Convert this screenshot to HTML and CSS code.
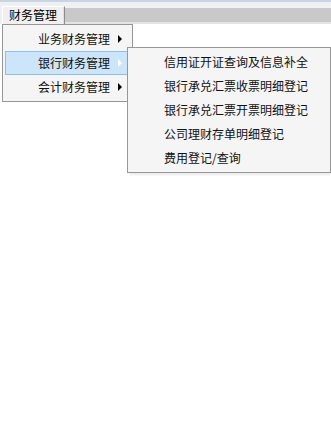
FILE: index.html
```html
<!DOCTYPE html>
<html lang="zh-CN">
<head>
<meta charset="utf-8">
<title>财务管理</title>
<link rel="stylesheet" href="styles.css">
</head>
<body>
<div class="menubar">
  <div class="tab">财务管理</div>
  <div class="bar"></div>
</div>
<div class="menu main-menu">
  <div class="item"><span class="label">业务财务管理</span><span class="arrow"></span></div>
  <div class="item active"><span class="label">银行财务管理</span><span class="arrow"></span></div>
  <div class="item"><span class="label">会计财务管理</span><span class="arrow"></span></div>
</div>
<div class="menu sub-menu">
  <div class="item"><span class="label">信用证开证查询及信息补全</span></div>
  <div class="item"><span class="label">银行承兑汇票收票明细登记</span></div>
  <div class="item"><span class="label">银行承兑汇票开票明细登记</span></div>
  <div class="item"><span class="label">公司理财存单明细登记</span></div>
  <div class="item"><span class="label">费用登记/查询</span></div>
</div>
</body>
</html>
```

FILE: styles.css
```css
html, body {
  margin: 0;
  padding: 0;
  background: #ffffff;
  font-family: "Noto Sans CJK SC", "Microsoft YaHei", sans-serif;
  font-size: 12px;
  color: #111111;
}

.menubar {
  display: flex;
  align-items: flex-end;
  height: 24px;
  border-top: 2px solid #c9d5e2;
  background: #eef0f3;
  box-sizing: border-box;
}

.tab {
  box-sizing: border-box;
  height: 18px;
  margin-left: 2px;
  padding: 0 7px 0 6px;
  line-height: 16px;
  background: #f0f0f0;
  border-left: 1px solid #ffffff;
  border-top: 1px solid #ffffff;
  border-right: 1px solid #8c8c8c;
  box-shadow: inset -1px 0 0 #e0e0e0;
  color: #000;
}

.bar {
  flex: 1;
  height: 16px;
  background: #c9c9c9;
  border-bottom: 2px solid #e3e3e3;
  box-sizing: border-box;
}

.menu {
  position: absolute;
  box-sizing: border-box;
  background: #f5f5f5;
  border: 1px solid #979797;
  padding: 2px 2px;
  display: flex;
  flex-direction: column;
}

.main-menu {
  left: 2px;
  top: 24px;
  width: 131px;
}

.sub-menu {
  left: 127px;
  top: 47px;
  width: 204px;
  box-shadow: 2px 2px 2px rgba(0,0,0,0.08);
}

.item {
  position: relative;
  box-sizing: border-box;
  height: 24px;
  line-height: 22px;
  border: 1px solid transparent;
  display: flex;
  align-items: center;
}

.main-menu .item .label {
  padding-left: 32px;
}

.sub-menu .item .label {
  padding-left: 33px;
}

.item.active {
  background: #cde5fa;
  border-color: #8fc0ec;
}

.arrow {
  position: absolute;
  right: 7px;
  top: 7px;
  width: 0;
  height: 0;
  border-top: 4px solid transparent;
  border-bottom: 4px solid transparent;
  border-left: 4px solid #000;
}

.item.active .arrow {
  border-left-color: #ffffff;
}
```
